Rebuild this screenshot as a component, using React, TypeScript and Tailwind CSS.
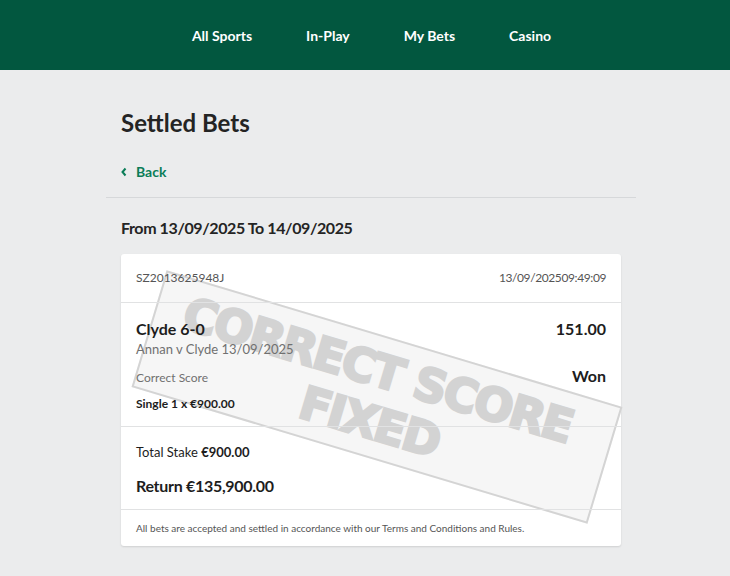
const navItems = ['All Sports', 'In-Play', 'My Bets', 'Casino']

function TopNav() {
  return (
    <header className="h-[70px] bg-[#02573f] flex items-center justify-center pl-[13px] gap-[54px]">
      {navItems.map((item) => (
        <a key={item} className="text-white text-[14px] font-bold cursor-pointer">
          {item}
        </a>
      ))}
    </header>
  )
}

/* stamp laid over the bet card, painted under the rows' text */
function Stamp() {
  return (
    <div className="pointer-events-none absolute left-[18px] top-[82px] w-[476px] h-[122px] rotate-[16.7deg] border-2 border-[#d4d4d4] bg-[#f2f2f2]/70 flex flex-col items-center justify-center leading-none text-[#d3d3d3] [-webkit-text-stroke:2.5px_#d3d3d3] font-['DejaVu_Sans',sans-serif] font-bold">
      <span className="text-[46px] tracking-[-2px] -ml-[14px]">CORRECT SCORE</span>
      <span className="text-[46px] tracking-[-2px] mt-[6px]">FIXED</span>
    </div>
  )
}

function BetCard() {
  return (
    <div className="relative mx-[15px] bg-white rounded-[3px] shadow-[0_1px_2px_rgba(0,0,0,0.12)]">
      <Stamp />
      <div className="relative h-[48px] px-[15px] flex items-center justify-between text-[12px] text-[#555]">
        <span>SZ2013625948J</span>
        <span className="tracking-[-0.4px]">13/09/202509:49:09</span>
      </div>
      <div className="relative border-t border-[#e1e2e3] px-[15px] pt-[15px] pb-[13px]">
        <div className="flex justify-between items-baseline leading-[22px]">
          <span className="text-[16px] font-bold text-[#1d1d1d]">Clyde 6-0</span>
          <span className="text-[16px] font-bold text-[#1d1d1d]">151.00</span>
        </div>
        <div className="text-[13px] text-[#707070] leading-[18px]">Annan v Clyde 13/09/2025</div>
        <div className="flex justify-between items-baseline mt-[7px] leading-[22px]">
          <span className="text-[12px] text-[#707070]">Correct Score</span>
          <span className="text-[16px] font-bold text-[#1d1d1d]">Won</span>
        </div>
        <div className="text-[12px] font-bold text-[#1d1d1d] mt-[6px] leading-[18px]">Single 1 x €900.00</div>
      </div>
      <div className="relative border-t border-[#e1e2e3] px-[15px] pt-[15px] pb-[12px]">
        <div className="text-[13px] text-[#1d1d1d] leading-[20px]">
          Total Stake <span className="font-bold">€900.00</span>
        </div>
        <div className="text-[16px] font-bold text-[#1d1d1d] mt-[13px] leading-[22px] tracking-[-0.3px]">
          Return €135,900.00
        </div>
      </div>
      <div className="relative border-t border-[#e1e2e3] px-[15px] h-[37px] pt-[1px] flex items-center text-[10px] text-[#555]">
        All bets are accepted and settled in accordance with our Terms and Conditions and Rules.
      </div>
    </div>
  )
}

export default function App() {
  return (
    <div className="min-h-screen bg-[#ebeced] font-['Lato',sans-serif] text-[#242424]">
      <TopNav />
      <main className="ml-[106px] w-[530px] pb-[30px]">
        <h1 className="px-[15px] pt-[38px] text-[24px] font-bold leading-[30px] text-[#242424]">
          Settled Bets
        </h1>
        <a className="px-[15px] mt-[24px] flex items-center gap-[9px] text-[14px] font-bold leading-[20px] text-[#0a7d58] cursor-pointer">
          <svg width="6" height="10" viewBox="0 0 6 10" fill="none">
            <path d="M4.5 1.5 L1.5 5 L4.5 8.5" stroke="currentColor" strokeWidth="2" />
          </svg>
          Back
        </a>
        <div className="mt-[15px] border-t border-[#d6d8da]" />
        <h2 className="px-[15px] pt-[19px] text-[16px] font-bold leading-[22px] text-[#242424] tracking-[-0.4px]">
          From 13/09/2025 To 14/09/2025
        </h2>
        <div className="mt-[15px]">
          <BetCard />
        </div>
      </main>
    </div>
  )
}
